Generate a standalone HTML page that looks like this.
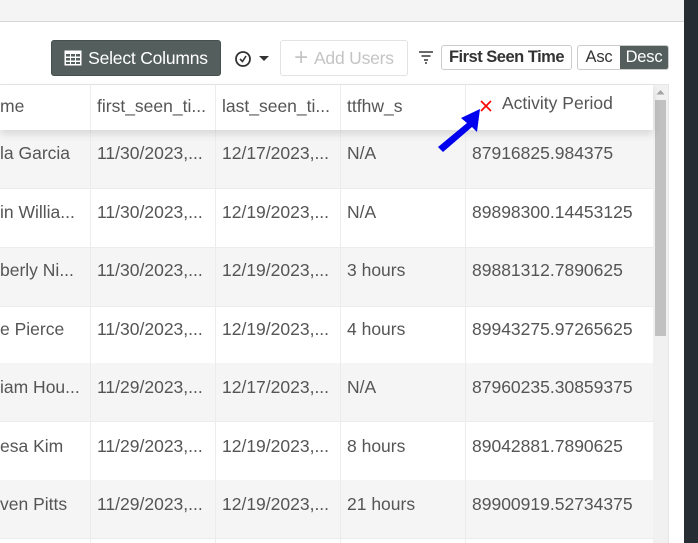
<!DOCTYPE html>
<html><head><style>
*{box-sizing:border-box;margin:0;padding:0}
body{width:698px;height:543px;overflow:hidden;background:#fff;font-family:"Liberation Sans",sans-serif;color:#555;position:relative}
.top{position:absolute;left:0;top:0;width:684px;height:22px;background:#f4f4f4;border-bottom:1px solid #d8d8d8}
.dark{position:absolute;left:684px;top:0;width:14px;height:543px;background:#262d33}
.btn{position:absolute;font-size:17.5px;letter-spacing:-0.2px;display:flex;align-items:center;justify-content:center;border-radius:3px}
.cell{position:absolute;font-size:17.5px;letter-spacing:0;white-space:nowrap;overflow:hidden;width:118px}
.row{position:absolute;left:0;width:653px;height:59px;border-bottom:1px solid #ececec}
.vl{position:absolute;top:84px;width:1px;height:459px;background:#ececec}
</style></head><body>
<div class="top"></div>
<div class="dark"></div>

<div class="btn" style="left:51px;top:40px;width:170px;height:36px;background:#545f5d;color:#fff;border:1px solid #464f4d">
<svg width="18" height="16" viewBox="0 0 18 16" style="margin-right:6px"><rect x="0.5" y="0.5" width="17" height="15" fill="#fff"/><g fill="#545f5d"><rect x="2" y="4" width="4" height="2.5"/><rect x="7" y="4" width="4" height="2.5"/><rect x="12" y="4" width="4" height="2.5"/><rect x="2" y="8" width="4" height="2.5"/><rect x="7" y="8" width="4" height="2.5"/><rect x="12" y="8" width="4" height="2.5"/><rect x="2" y="12" width="4" height="2"/><rect x="7" y="12" width="4" height="2"/><rect x="12" y="12" width="4" height="2"/></g></svg>Select Columns</div>

<svg style="position:absolute;left:234px;top:49px" width="38" height="20" viewBox="0 0 38 20"><circle cx="9" cy="10" r="7" fill="none" stroke="#333" stroke-width="1.8"/><path d="M6 10l2.5 2.5L12 7" fill="none" stroke="#333" stroke-width="1.6"/><path d="M25 7h10l-5 5z" fill="#333"/></svg>

<div class="btn" style="left:280px;top:40px;width:128px;height:36px;border:1px solid #e3e3e3;color:#c4c4c4"><span style="font-size:24px;margin-right:6px;font-weight:300">+</span>Add Users</div>

<svg style="position:absolute;left:418px;top:50px" width="16" height="14" viewBox="0 0 16 14"><path d="M1 2h14M3.5 6h9M6 10h4M7 13h2" stroke="#555" stroke-width="1.8"/></svg>

<div class="btn" style="left:441px;top:45px;width:131px;height:25px;border:1px solid #ccc;color:#333;font-weight:bold;font-size:16.5px;letter-spacing:-0.5px">First Seen Time</div>
<div class="btn" style="left:577px;top:45px;width:92px;height:25px;border:1px solid #ccc;overflow:hidden;justify-content:flex-start;font-size:16.5px">
<span style="width:42px;text-align:center;color:#333">Asc</span><span style="flex:1;height:100%;background:#545f5d;color:#fff;display:flex;align-items:center;justify-content:center">Desc</span></div>

<div style="position:absolute;left:0;top:84px;width:669px;height:459px;border-top:1px solid #e6e6e6;border-right:1px solid #e6e6e6"></div>
<div style="position:absolute;left:0;top:85px;width:653px;height:45px;background:#fff;box-shadow:0 4px 8px rgba(0,0,0,0.12);z-index:2"></div>
<div class="row" style="top:130px;background:#f5f5f5"></div>
<div class="row" style="top:189px"></div>
<div class="row" style="top:248px;background:#f5f5f5"></div>
<div class="row" style="top:307px"></div>
<div class="row" style="top:363px;background:#f5f5f5"></div>
<div class="row" style="top:422px"></div>
<div class="row" style="top:480px;background:#f5f5f5"></div>
<div class="vl" style="left:90px"></div><div class="vl" style="left:215px"></div><div class="vl" style="left:340px"></div><div class="vl" style="left:465px"></div>

<div style="z-index:3;position:absolute;left:0;top:85px;width:653px;height:45px">
<div class="cell" style="left:0;top:11px;width:88px">me</div>
<div class="cell" style="left:97px;top:11px">first_seen_ti...</div>
<div class="cell" style="left:222px;top:11px">last_seen_ti...</div>
<div class="cell" style="left:347px;top:11px">ttfhw_s</div>
<div class="cell" style="left:502px;top:8px;width:150px">Activity Period</div>
<div class="vl" style="left:90px;top:0;height:45px"></div><div class="vl" style="left:215px;top:0;height:45px"></div><div class="vl" style="left:340px;top:0;height:45px"></div><div class="vl" style="left:465px;top:0;height:45px"></div>
</div>
<svg style="position:absolute;left:436px;top:94px;z-index:4" width="60" height="60" viewBox="0 0 60 60"><path d="M45 7l10 10M55 7L45 17" stroke="#f00" stroke-width="1.6"/><path d="M44 15L25 24l6 5L2 53l5 5 29-25 5 5z" fill="#0000ee"/></svg>

<div style="position:absolute;left:0;top:0">
<div class="cell" style="left:0;top:143px;width:88px">la Garcia</div><div class="cell" style="left:97px;top:143px">11/30/2023,...</div><div class="cell" style="left:222px;top:143px">12/17/2023,...</div><div class="cell" style="left:347px;top:143px">N/A</div><div class="cell" style="left:472px;top:143px;width:180px">87916825.984375</div>
<div class="cell" style="left:0;top:202px;width:88px">in Willia...</div><div class="cell" style="left:97px;top:202px">11/30/2023,...</div><div class="cell" style="left:222px;top:202px">12/19/2023,...</div><div class="cell" style="left:347px;top:202px">N/A</div><div class="cell" style="left:472px;top:202px;width:180px">89898300.14453125</div>
<div class="cell" style="left:0;top:260px;width:88px">berly Ni...</div><div class="cell" style="left:97px;top:260px">11/30/2023,...</div><div class="cell" style="left:222px;top:260px">12/19/2023,...</div><div class="cell" style="left:347px;top:260px">3 hours</div><div class="cell" style="left:472px;top:260px;width:180px">89881312.7890625</div>
<div class="cell" style="left:0;top:319px;width:88px">e Pierce</div><div class="cell" style="left:97px;top:319px">11/30/2023,...</div><div class="cell" style="left:222px;top:319px">12/19/2023,...</div><div class="cell" style="left:347px;top:319px">4 hours</div><div class="cell" style="left:472px;top:319px;width:180px">89943275.97265625</div>
<div class="cell" style="left:0;top:377px;width:88px">iam Hou...</div><div class="cell" style="left:97px;top:377px">11/29/2023,...</div><div class="cell" style="left:222px;top:377px">12/17/2023,...</div><div class="cell" style="left:347px;top:377px">N/A</div><div class="cell" style="left:472px;top:377px;width:180px">87960235.30859375</div>
<div class="cell" style="left:0;top:436px;width:88px">esa Kim</div><div class="cell" style="left:97px;top:436px">11/29/2023,...</div><div class="cell" style="left:222px;top:436px">12/19/2023,...</div><div class="cell" style="left:347px;top:436px">8 hours</div><div class="cell" style="left:472px;top:436px;width:180px">89042881.7890625</div>
<div class="cell" style="left:0;top:494px;width:88px">ven Pitts</div><div class="cell" style="left:97px;top:494px">11/29/2023,...</div><div class="cell" style="left:222px;top:494px">12/19/2023,...</div><div class="cell" style="left:347px;top:494px">21 hours</div><div class="cell" style="left:472px;top:494px;width:180px">89900919.52734375</div>
</div>

<div style="position:absolute;left:653px;top:85px;width:15px;height:458px;background:#f1f1f1"></div>
<svg style="position:absolute;left:656px;top:89px" width="9" height="6"><path d="M0.5 5.5L4.5 1l4 4.5z" fill="#a3a3a3"/></svg>
<div style="position:absolute;left:655px;top:100px;width:11px;height:236px;background:#c1c1c1"></div>
</body></html>
